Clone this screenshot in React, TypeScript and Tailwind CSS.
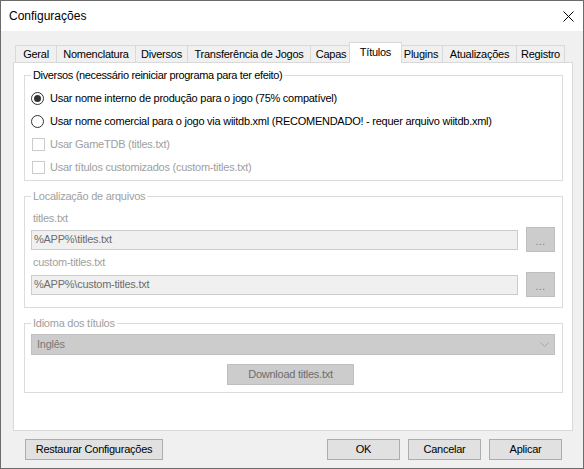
import React from "react";

type Tab = { label: string; cls: string; active?: boolean };

const tabs: Tab[] = [
  { label: "Geral", cls: "w-[42px]" },
  { label: "Nomenclatura", cls: "w-[80px] -ml-px" },
  { label: "Diversos", cls: "w-[53px] -ml-px" },
  { label: "Transferência de Jogos", cls: "w-[124px] -ml-px" },
  { label: "Capas", cls: "w-[42px] -ml-px" },
  { label: "Títulos", cls: "w-[53px] -ml-[3px]", active: true },
  { label: "Plugins", cls: "w-[44px] -ml-[3px]" },
  { label: "Atualizações", cls: "w-[75px] -ml-px" },
  { label: "Registro", cls: "w-[49px] -ml-px" },
];

function TabStrip() {
  return (
    <div className="flex h-[20px] items-end pl-[2px]">
      {tabs.map((t) =>
        t.active ? (
          <div
            key={t.label}
            className={`${t.cls} relative z-10 -mb-px flex h-[21px] items-center justify-center border border-b-0 border-[#d9d9d9] bg-white pb-[2px] text-black`}
          >
            {t.label}
          </div>
        ) : (
          <div
            key={t.label}
            className={`${t.cls} flex h-[17px] items-center justify-center border border-b-0 border-[#d9d9d9] bg-[#f0f0f0] text-black`}
          >
            {t.label}
          </div>
        )
      )}
    </div>
  );
}

function Radio({ checked, label }: { checked?: boolean; label: string }) {
  return (
    <div className="flex h-[23px] items-center">
      <div className="flex h-[13px] w-[13px] items-center justify-center rounded-full border border-[#333333] bg-white">
        {checked && <div className="h-[7px] w-[7px] rounded-full bg-[#333333]" />}
      </div>
      <span className="ml-[6px] text-black">{label}</span>
    </div>
  );
}

function DisabledCheck({ label }: { label: string }) {
  return (
    <div className="flex h-[23px] items-center">
      <div className="ml-[1px] h-[13px] w-[13px] border border-[#cccccc] bg-white" />
      <span className="ml-[5px] text-[#a0a0a0]">{label}</span>
    </div>
  );
}

function PathRow({ value }: { value: string }) {
  return (
    <div className="flex h-[25px] items-center">
      <div className="flex h-[20px] flex-1 items-center border border-[#cccccc] bg-[#f0f0f0] pl-[2px] text-[#6d6d6d]">
        {value}
      </div>
      <div className="ml-[8px] flex h-[25px] w-[29px] items-center justify-center border border-[#bfbfbf] bg-[#cccccc] pt-[3px] text-[10px] tracking-[0.5px] text-[#7a7a7a]">
        ...
      </div>
    </div>
  );
}

export default function App() {
  return (
    <div className="flex h-[469px] w-[584px] flex-col border border-[#6b6b6b] font-['Liberation_Sans',Arial,sans-serif] text-[11px] leading-[13px] tracking-[-0.25px] text-black">
      {/* title bar */}
      <div className="flex h-[30px] shrink-0 items-center justify-between bg-white pl-[8px] pr-[9px]">
        <span className="text-[12px] tracking-normal text-black">Configurações</span>
        <svg width="11" height="11" viewBox="0 0 11 11" className="block">
          <path d="M0.5 0.5 L10.5 10.5 M10.5 0.5 L0.5 10.5" stroke="#000" strokeWidth="1" fill="none" />
        </svg>
      </div>

      {/* client area */}
      <div className="flex flex-1 flex-col bg-[#f0f0f0] pl-[12px] pr-[10px] pt-[11px]">
        <TabStrip />

        <div className="h-[369px] w-[560px] border border-[#d9d9d9] bg-white pl-[10px] pr-[9px]">
          <fieldset className="mt-[6px] border border-[#dcdcdc] pb-[1px] pl-[6px] pr-[7px] pt-[5px]">
            <legend className="px-[2px] leading-[13px] tracking-[-0.35px] text-black">
              Diversos (necessário reiniciar programa para ter efeito)
            </legend>
            <Radio checked label="Usar nome interno de produção para o jogo (75% compatível)" />
            <Radio label="Usar nome comercial para o jogo via wiitdb.xml (RECOMENDADO! - requer arquivo wiitdb.xml)" />
            <DisabledCheck label="Usar GameTDB (titles.txt)" />
            <DisabledCheck label="Usar títulos customizados (custom-titles.txt)" />
          </fieldset>

          <fieldset className="mt-[9px] border border-[#dcdcdc] pb-[10px] pl-[6px] pr-[7px] pt-[9px]">
            <legend className="px-[2px] leading-[13px] text-[#a0a0a0]">Localização de arquivos</legend>
            <div className="ml-[2px] h-[13px] text-[#a0a0a0]">titles.txt</div>
            <div className="mt-[2px]">
              <PathRow value="%APP%\titles.txt" />
            </div>
            <div className="ml-[2px] mt-[4px] h-[13px] text-[#a0a0a0]">custom-titles.txt</div>
            <div className="mt-[3px]">
              <PathRow value="%APP%\custom-titles.txt" />
            </div>
          </fieldset>

          <fieldset className="mt-[9px] border border-[#dcdcdc] pb-[7px] pl-[6px] pr-[7px] pt-[4px]">
            <legend className="px-[2px] leading-[13px] text-[#a0a0a0]">Idioma dos títulos</legend>
            <div className="flex h-[21px] items-center justify-between border border-[#bfbfbf] bg-[#cccccc] pl-[5px] pr-[5px] text-[#7a7a7a]">
              <span>Inglês</span>
              <svg width="9" height="5" viewBox="0 0 9 5" className="block">
                <path d="M0.5 0.5 L4.5 4.5 L8.5 0.5" stroke="#a6a6a6" strokeWidth="1" fill="none" />
              </svg>
            </div>
            <div className="ml-[196px] mt-[9px] flex h-[21px] w-[127px] items-center justify-center border border-[#bfbfbf] bg-[#cccccc] text-[#6d6d6d]">
              Download titles.txt
            </div>
          </fieldset>
        </div>

        {/* dialog buttons */}
        <div className="mt-[8px] flex h-[21px]">
          <button className="ml-[12px] flex h-[21px] w-[138px] items-center justify-center border border-[#adadad] bg-[#e1e1e1] text-black">
            Restaurar Configurações
          </button>
          <div className="flex-1" />
          <button className="flex h-[21px] w-[73px] items-center justify-center border border-[#adadad] bg-[#e1e1e1] text-black">
            OK
          </button>
          <button className="ml-[8px] flex h-[21px] w-[73px] items-center justify-center border border-[#adadad] bg-[#e1e1e1] text-black">
            Cancelar
          </button>
          <button className="ml-[8px] mr-[11px] flex h-[21px] w-[73px] items-center justify-center border border-[#adadad] bg-[#e1e1e1] text-black">
            Aplicar
          </button>
        </div>
      </div>
    </div>
  );
}
